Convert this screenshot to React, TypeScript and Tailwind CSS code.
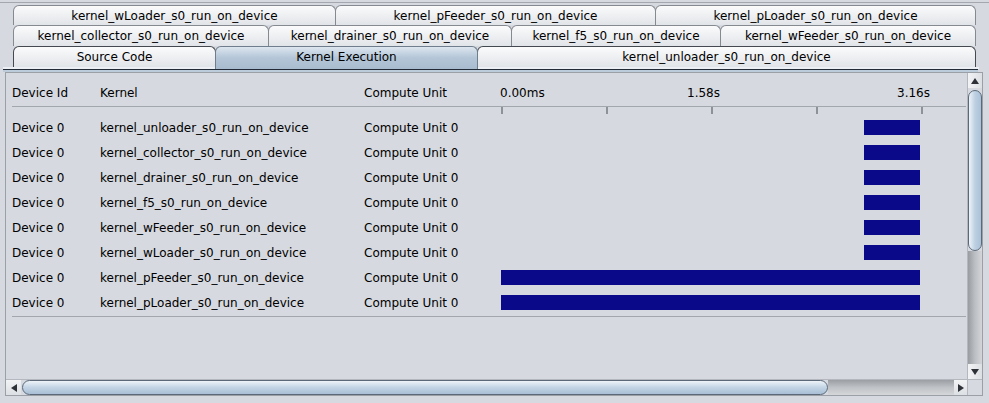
import React from 'react';

const rows = [
  { kernel: 'kernel_unloader_s0_run_on_device', start: 363, width: 56 },
  { kernel: 'kernel_collector_s0_run_on_device', start: 363, width: 56 },
  { kernel: 'kernel_drainer_s0_run_on_device', start: 363, width: 56 },
  { kernel: 'kernel_f5_s0_run_on_device', start: 363, width: 56 },
  { kernel: 'kernel_wFeeder_s0_run_on_device', start: 363, width: 56 },
  { kernel: 'kernel_wLoader_s0_run_on_device', start: 363, width: 56 },
  { kernel: 'kernel_pFeeder_s0_run_on_device', start: 0, width: 419 },
  { kernel: 'kernel_pLoader_s0_run_on_device', start: 0, width: 419 },
];

const tabFace =
  'flex items-center justify-center pt-px border border-b-0 rounded-t-[6px] bg-linear-to-b from-[#fbfbfc] to-[#e1e4e8] text-black';

function Tab({ label, className }: { label: string; className: string }) {
  return <div className={`${tabFace} ${className}`}>{label}</div>;
}

function Strip() {
  return <div className="h-[2px] bg-[#eceff3]" />;
}

function ArrowUp() {
  return (
    <svg width="8" height="6" viewBox="0 0 8 6"><path d="M4 0L8 6H0Z" fill="#2e3238" /></svg>
  );
}
function ArrowDown() {
  return (
    <svg width="8" height="6" viewBox="0 0 8 6"><path d="M0 0H8L4 6Z" fill="#2e3238" /></svg>
  );
}
function ArrowLeft() {
  return (
    <svg width="6" height="8" viewBox="0 0 6 8"><path d="M0 4L6 0V8Z" fill="#2e3238" /></svg>
  );
}
function ArrowRight() {
  return (
    <svg width="6" height="8" viewBox="0 0 6 8"><path d="M6 4L0 0V8Z" fill="#2e3238" /></svg>
  );
}

export default function App() {
  return (
    <div
      className="w-[989px] h-[403px] overflow-hidden bg-[#d6d9df] text-[12px] leading-[15px] text-black"
      style={{ fontFamily: '"DejaVu Sans", Verdana, sans-serif' }}
    >
      {/* window top edge */}
      <div className="mt-[2px] h-px bg-[#a4a8ae]" />

      {/* tab rows */}
      <div className="mt-[2px] flex h-[20px] pl-[13px]">
        <Tab label="kernel_wLoader_s0_run_on_device" className="w-[323px] border-[#858a91]" />
        <Tab label="kernel_pFeeder_s0_run_on_device" className="-ml-px w-[321px] border-[#858a91]" />
        <Tab label="kernel_pLoader_s0_run_on_device" className="-ml-px w-[321px] border-[#858a91]" />
      </div>
      <div className="flex h-[21px] pl-[13px]">
        <Tab label="kernel_collector_s0_run_on_device" className="w-[256px] border-[#858a91]" />
        <Tab label="kernel_drainer_s0_run_on_device" className="-ml-px w-[244px] border-[#858a91]" />
        <Tab label="kernel_f5_s0_run_on_device" className="-ml-px w-[210px] border-[#858a91]" />
        <Tab label="kernel_wFeeder_s0_run_on_device" className="-ml-px w-[256px] border-[#858a91]" />
      </div>
      <div className="ml-[3px] flex h-[23px]">
        <div className="flex w-[10px] flex-col justify-end">
          <Strip />
        </div>
        <div className="flex w-[203px] flex-col">
          <Tab label="Source Code" className="h-[21px] border-b border-[#454a51]" />
          <Strip />
        </div>
        <div className="relative z-10 -ml-px flex h-[23px] w-[263px] items-center justify-center rounded-t-[6px] border border-b-0 border-[#6f7d8c] bg-linear-to-b from-[#dde6ef] via-[#b3c5d7] to-[#a9bccf] pb-[2px]">
          Kernel Execution
        </div>
        <div className="-ml-px flex w-[499px] flex-col">
          <Tab label="kernel_unloader_s0_run_on_device" className="h-[21px] border-b border-[#454a51]" />
          <Strip />
        </div>
        <div className="flex w-[3px] flex-col justify-end">
          <Strip />
        </div>
      </div>
      <div className="ml-[3px] h-px w-[975px] bg-[#232c36]" />
      <div className="ml-[3px] h-[2px] w-[975px] bg-[#bdccdb]" />

      {/* scroll pane */}
      <div className="ml-[5px] flex h-[324px] w-[978px] flex-col border border-[#9ba0a7]">
        <div className="flex h-[306px]">
          {/* viewport */}
          <div className="w-[961px] pl-[6px]">
            <div className="flex h-[34px] w-[954px] items-end border-b border-[#a2a7ae] pb-[5px]">
              <div className="w-[88px]">Device Id</div>
              <div className="w-[264px]">Kernel</div>
              <div className="w-[137px]">Compute Unit</div>
              <div className="relative h-[15px] w-[420px]">
                <span className="absolute left-[-1px] top-0">0.00ms</span>
                <span className="absolute left-[186px] top-0">1.58s</span>
                <span className="absolute left-[396px] top-0">3.16s</span>
              </div>
            </div>
            <div className="flex h-[8px]">
              <div className="w-[489px]" />
              <div className="flex h-[7px] w-[422px] justify-between">
                {[0, 1, 2, 3, 4].map((i) => (
                  <div key={i} className="w-[2px] bg-[#8d9198]" />
                ))}
              </div>
            </div>
            {rows.map((r) => (
              <div key={r.kernel} className="flex h-[25px] items-center">
                <div className="w-[88px] pt-[2px]">Device 0</div>
                <div className="w-[264px] pt-[2px]">{r.kernel}</div>
                <div className="w-[137px] pt-[2px]">Compute Unit 0</div>
                <div className="flex h-[15px] w-[420px]">
                  <div
                    className="h-[15px] bg-[#09098a]"
                    style={{ marginLeft: r.start, width: r.width }}
                  />
                </div>
              </div>
            ))}
            <div className="mt-px h-px w-[954px] bg-[#a2a7ae]" />
          </div>

          {/* vertical scrollbar */}
          <div className="flex w-[15px] flex-col border-l border-[#b4b8be]">
            <div className="flex h-[15px] items-center justify-center bg-linear-to-r from-[#f2f3f5] to-[#dcdfe3]">
              <ArrowUp />
            </div>
            <div className="mt-[2px] h-[161px] rounded-[7px] border border-[#5b6979] bg-linear-to-r from-[#eef3f8] via-[#bdd0e2] to-[#aac1d7]" />
            <div className="flex-1 bg-linear-to-r from-[#999ca1] via-[#bcbfc4] to-[#d3d5d9]" />
            <div className="flex h-[15px] items-center justify-center bg-linear-to-r from-[#f2f3f5] to-[#dcdfe3]">
              <ArrowDown />
            </div>
          </div>
        </div>

        <div className="flex h-[16px]">
          {/* horizontal scrollbar */}
          <div className="flex w-[961px] border-t border-[#b4b8be]">
            <div className="flex w-[15px] items-center justify-center bg-linear-to-b from-[#f2f3f5] to-[#dcdfe3]">
              <ArrowLeft />
            </div>
            <div className="ml-px w-[806px] rounded-[8px] border border-[#5b6979] bg-linear-to-b from-[#eef3f8] via-[#c3d4e5] to-[#a9bfd5]" />
            <div className="flex-1 bg-linear-to-b from-[#9b9ea3] via-[#bfc2c6] to-[#d5d7da]" />
            <div className="flex w-[13px] items-center justify-center bg-linear-to-b from-[#f2f3f5] to-[#dcdfe3]">
              <ArrowRight />
            </div>
          </div>
          <div className="w-[15px] border-l border-t border-[#b4b8be] bg-[#d6d9df]" />
        </div>
      </div>
    </div>
  );
}
